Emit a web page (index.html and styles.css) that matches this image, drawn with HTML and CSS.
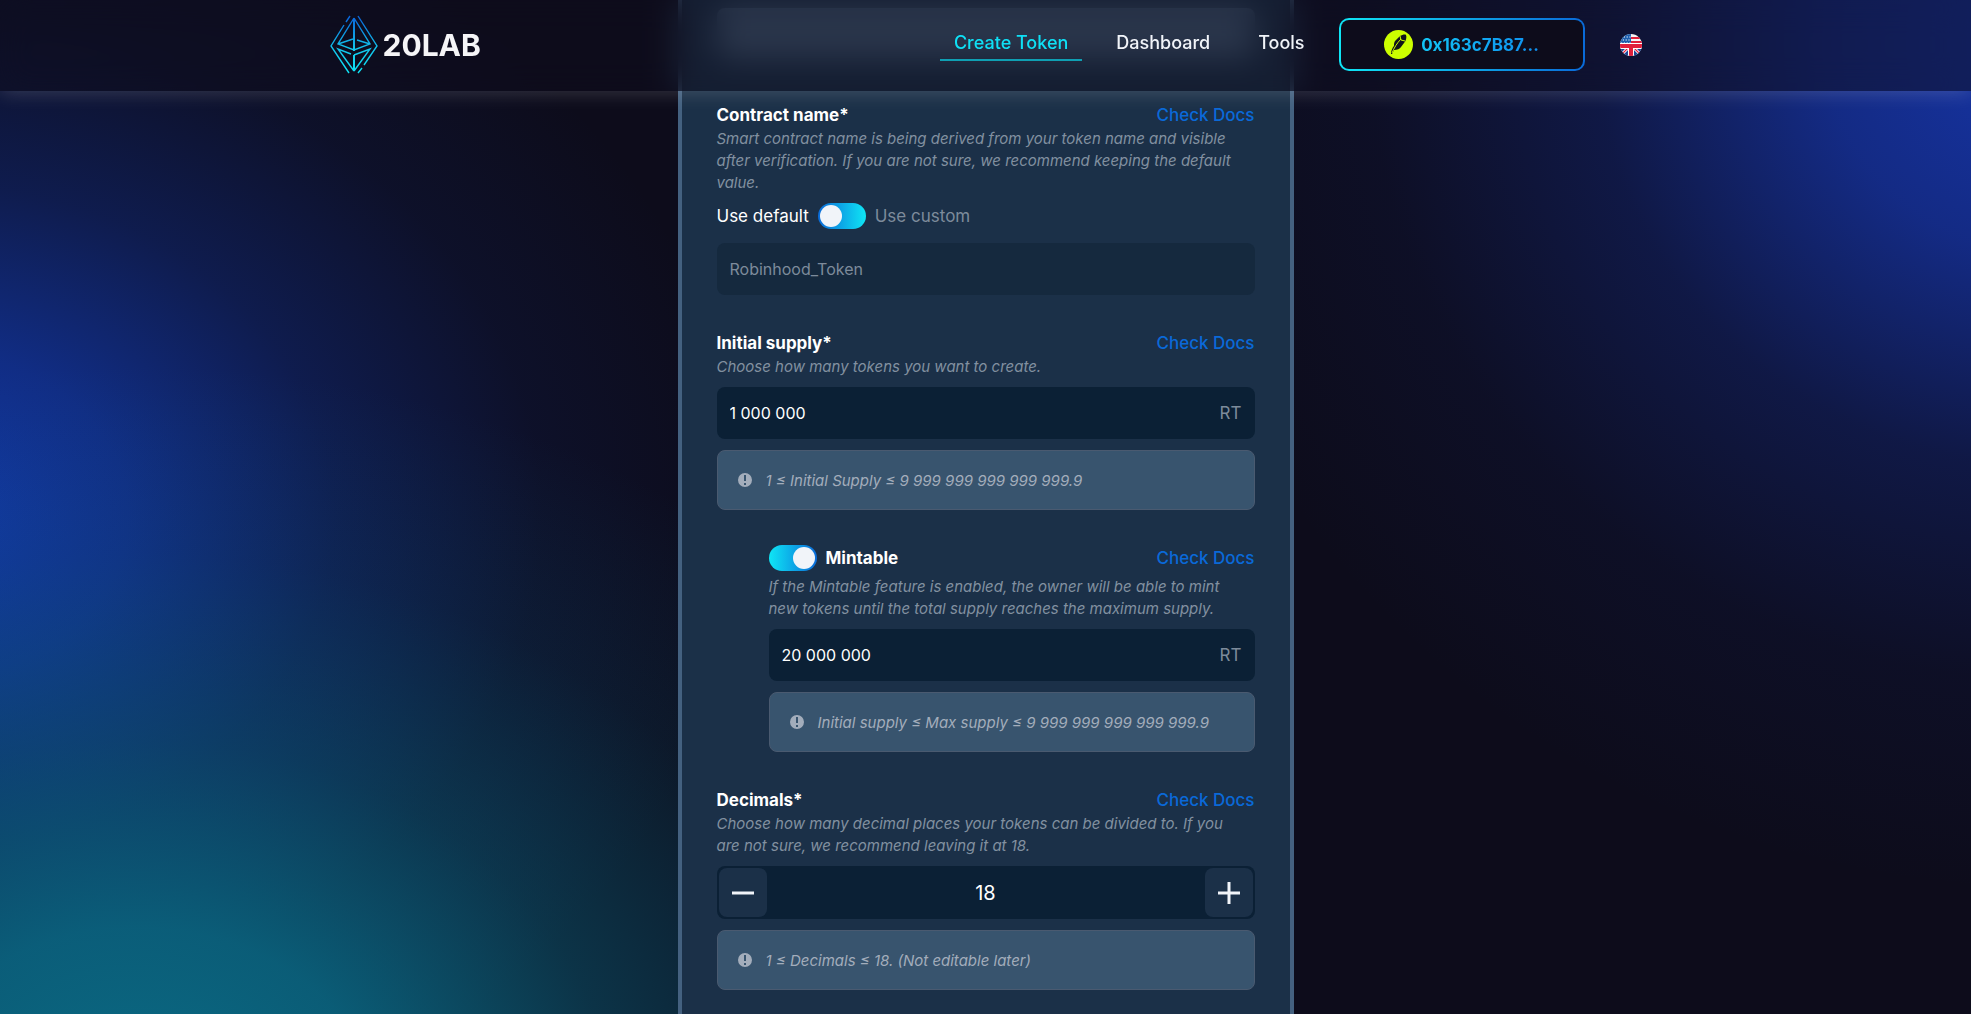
FILE: index.html
```
<!DOCTYPE html>
<html lang="en">

<head>
  <meta charset="UTF-8" />
  <meta name="viewport" content="width=device-width, initial-scale=1.0" />
  <title>20LAB - Create Token</title>
  <link rel="stylesheet" href="styles.css">
</head>

<body>
  <header class="header">
    <div class="header-inner">
      <a class="logo" href="#">
        <svg class="logo-mark" viewBox="0 0 48 60" width="48" height="60" fill="none" stroke="url(#logoGrad)" stroke-width="1.4">
          <defs>
            <linearGradient id="logoGrad" gradientUnits="userSpaceOnUse" x1="0" y1="0" x2="0" y2="60">
              <stop offset="0" stop-color="#0a5fd8" />
              <stop offset=".55" stop-color="#12c4ec" />
              <stop offset="1" stop-color="#0fe6f5" />
            </linearGradient>
          </defs>
          <path d="M20 1l-4 6M14 10L1 31l18 27" />
          <path d="M28 1l19 30-13 19M32 53l-4 5" />
          <path d="M24 3v33M24 40v16" stroke-width="2" />
          <path d="M24 3L8 29l16 6 16-6L24 3M8 29l15-5M40 29l-13-4" />
          <path d="M24 56L8 34l13 5M24 56l16-22-16 6" />
        </svg>
        <span class="logo-text">20LAB</span>
      </a>
      <nav class="nav">
        <a class="nav-link active" href="#">Create Token</a>
        <a class="nav-link" href="#">Dashboard</a>
        <a class="nav-link" href="#">Tools</a>
      </nav>
      <button class="wallet" type="button">
        <svg viewBox="0 0 29 29" width="29" height="29">
          <circle cx="14.500" cy="14.500" r="14.500" fill="#ccff00" />
          <path d="M7 24c0-4 2-7 3-8 0-3 0-4 2-6l4-4c2-1 5-2 6-1 1 2 0 6-2 8l-3 4c-1 2-4 3-7 3l-2 4z" fill="#10131a" />
          <path d="M8 23c2-5 5-10 9-14M16 6l1 4 4 1" fill="none" stroke="#ccff00" />
        </svg>
        <span class="wallet-text">0x163c7B87...</span>
      </button>
      <button class="lang" type="button" aria-label="Language">
        <svg viewBox="0 0 22 22" width="22" height="22">
          <clipPath id="flagClip"><circle cx="11" cy="11" r="11" /></clipPath>
          <g clip-path="url(#flagClip)">
            <path fill="#f4f4f4" d="M0 0h22v22H0z" />
            <path stroke="#e0203c" stroke-width="2" d="M11 4h11M11 8h11" />
            <path fill="#1d5fae" d="M0 0h11v11H0z" />
            <path stroke="#fff" stroke-width="1.200" stroke-dasharray="1.200 1.600" d="M1 3h10M0 6h10M1 9h10" />
            <path fill="#1c4796" d="M0 14h22v8H0z" />
            <path stroke="#fff" stroke-width="3" d="M9 13L0 22M13 13l9 9" />
            <path stroke="#e0203c" stroke-width="1.200" d="M9 13L0 22M13 13l9 9" />
            <path stroke="#fff" stroke-width="6" d="M11 11v11M0 12h22" />
            <path stroke="#e0203c" stroke-width="4" d="M11 10v12M0 12h22" />
          </g>
        </svg>
      </button>
    </div>
  </header>

  <main class="card">
    <div class="card-top"></div>

    <section class="field">
      <div class="field-head">
        <label class="title" for="contract">Contract name*</label>
        <a class="docs" href="#">Check Docs</a>
      </div>
      <p class="desc">Smart contract name is being derived from your token name and visible after verification. If you are not sure, we recommend keeping the default value.</p>
      <label class="choice">
        <span>Use default</span>
        <input class="switch" type="checkbox">
        <span class="muted">Use custom</span>
      </label>
      <input class="box disabled" id="contract" type="text" value="Robinhood_Token" disabled>
    </section>

    <section class="field">
      <div class="field-head">
        <label class="title" for="supply">Initial supply*</label>
        <a class="docs" href="#">Check Docs</a>
      </div>
      <p class="desc">Choose how many tokens you want to create.</p>
      <div class="box">
        <input class="amount" id="supply" type="text" value="1 000 000">
        <span class="unit">RT</span>
      </div>
      <div class="info">
        <svg class="info-icon" viewBox="0 0 16 16" width="16" height="16"><circle cx="8" cy="8" r="8" /><path d="M8 3v6M8 11v2" /></svg>
        <span>1 ≤ Initial Supply ≤ 9 999 999 999 999 999.9</span>
      </div>
    </section>

    <section class="field nested">
      <div class="field-head">
        <label class="title with-switch"><input class="switch" type="checkbox" checked> Mintable</label>
        <a class="docs" href="#">Check Docs</a>
      </div>
      <p class="desc">If the Mintable feature is enabled, the owner will be able to mint new tokens until the total supply reaches the maximum supply.</p>
      <div class="box">
        <input class="amount" type="text" aria-label="Max supply" value="20 000 000">
        <span class="unit">RT</span>
      </div>
      <div class="info">
        <svg class="info-icon" viewBox="0 0 16 16" width="16" height="16"><circle cx="8" cy="8" r="8" /><path d="M8 3v6M8 11v2" /></svg>
        <span>Initial supply ≤ Max supply ≤ 9 999 999 999 999 999.9</span>
      </div>
    </section>

    <section class="field">
      <div class="field-head">
        <label class="title" for="decimals">Decimals*</label>
        <a class="docs" href="#">Check Docs</a>
      </div>
      <p class="desc">Choose how many decimal places your tokens can be divided to. If you are not sure, we recommend leaving it at 18.</p>
      <div class="stepper">
        <button class="step" type="button" aria-label="Decrease"><svg viewBox="0 0 22 22" width="22" height="22"><path d="M0 11h22" /></svg></button>
        <input class="step-value" id="decimals" type="text" value="18">
        <button class="step" type="button" aria-label="Increase"><svg viewBox="0 0 22 22" width="22" height="22"><path d="M0 11h22M11 0v22" /></svg></button>
      </div>
      <div class="info">
        <svg class="info-icon" viewBox="0 0 16 16" width="16" height="16"><circle cx="8" cy="8" r="8" /><path d="M8 3v6M8 11v2" /></svg>
        <span>1 ≤ Decimals ≤ 18. (Not editable later)</span>
      </div>
    </section>
  </main>
</body>

</html>
```
FILE: styles.css
```
* {
  box-sizing: border-box;
}

body {
  margin: 0;
  min-height: 100vh;
  font-family: Inter, "Liberation Sans", sans-serif;
  font-size: 16px;
  color: #fff;
  background-color: #0d0c1b;
  background-image:
    radial-gradient(ellipse 48% 74% at 7% 110%, #0a6c86 0%, rgba(10, 106, 133, .85) 25%, rgba(10, 106, 133, .42) 50%, rgba(10, 106, 133, .13) 75%, rgba(10, 106, 133, 0) 100%),
    radial-gradient(ellipse 42% 66% at -4% 51%, #1238a8 0%, rgba(18, 56, 168, .75) 25%, rgba(18, 56, 168, .36) 50%, rgba(18, 56, 168, .1) 75%, rgba(18, 56, 168, 0) 100%),
    radial-gradient(ellipse 46% 84% at 104% 4%, #1635a8 0%, rgba(22, 53, 168, .75) 25%, rgba(22, 53, 168, .3) 50%, rgba(22, 53, 168, .08) 75%, rgba(22, 53, 168, 0) 100%);
  background-attachment: fixed;
}

a {
  text-decoration: none;
}

input,
button {
  font: inherit;
  color: inherit;
}

.header {
  position: fixed;
  top: 0;
  left: 0;
  right: 0;
  z-index: 2;
  height: 91px;
  background: rgba(13, 12, 27, .5);
  backdrop-filter: blur(16px);
  box-shadow: 0 0 20px rgba(255, 255, 255, .2);
}

.header-inner {
  display: flex;
  align-items: center;
  max-width: 1312px;
  height: 89px;
  margin: 0 auto;
}

.logo {
  display: flex;
  align-items: center;
  gap: 5px;
  margin-right: auto;
  color: #f5f5f7;
}

.logo-text {
  font-size: 30px;
  font-weight: 700;
}

.nav {
  display: flex;
  gap: 20px;
  margin-right: 20px;
  padding-bottom: 4px;
}

.nav-link {
  padding: 4px 14px 2px;
  border-bottom: 2px solid transparent;
  font-size: 18px;
  font-weight: 500;
  line-height: 28px;
  color: #f1f4f9;
}

.nav-link.active {
  color: #0fe0f5;
  border-color: #0f9fb3;
}

.wallet {
  display: flex;
  align-items: center;
  justify-content: center;
  gap: 8px;
  width: 246px;
  height: 53px;
  border: 2px solid transparent;
  border-radius: 10px;
  background:
    linear-gradient(#0d0c1b, #0d0c1b) padding-box,
    linear-gradient(90deg, #0fe6f5, #0a6ad8) border-box;
}

.wallet-text {
  font-size: 17px;
  font-weight: 700;
  background: linear-gradient(90deg, #12c4f5, #0f8ff0);
  background-clip: text;
  color: transparent;
}

.lang {
  display: flex;
  margin-left: 35px;
  padding: 0;
  border: 0;
  background: none;
}

.card {
  width: 616px;
  max-width: 100%;
  margin: 0 auto;
  padding: 8px 35px 0;
  border: solid #446180;
  border-width: 0 4px;
  background: #1b3048;
}

/* panel scrolled under the header */
.card-top {
  height: 50px;
  margin-bottom: 44px;
  border-radius: 8px;
  background: #48617c;
}

.field {
  padding-bottom: 35px;
}

.field:last-child {
  padding-bottom: 24px;
}

.nested {
  padding-left: 52px;
}

.field-head {
  display: flex;
  align-items: center;
  justify-content: space-between;
  min-height: 26px;
}

.nested .field-head {
  margin-bottom: 5px;
}

.title,
.docs {
  font-size: 17px;
  line-height: 26px;
}

.title {
  font-weight: 700;
}

.with-switch {
  display: flex;
  align-items: center;
  gap: 9px;
}

.docs {
  font-weight: 500;
  color: #0a69d8;
}

.desc {
  margin: 0 0 9px;
  padding-right: 10px;
  font-size: 15px;
  font-style: italic;
  line-height: 22px;
  color: #8290a0;
}

.choice {
  display: flex;
  align-items: center;
  gap: 9px;
  margin-bottom: 14px;
  font-size: 17px;
  line-height: 26px;
}

.muted {
  color: #7d8b9b;
}

.switch {
  appearance: none;
  display: flex;
  width: 48px;
  height: 26px;
  margin: 0;
  padding: 2px;
  border-radius: 13px;
  background: linear-gradient(90deg, #0a6ad8, #0fe6f5);
}

.switch::before {
  content: "";
  width: 22px;
  height: 22px;
  border-radius: 50%;
  background: #f1f4f9;
}

.switch:checked {
  justify-content: flex-end;
  background: linear-gradient(90deg, #0fe6f5, #0a6ad8);
}

.box {
  display: flex;
  align-items: center;
  width: 100%;
  height: 52px;
  padding: 0 13px;
  border: 0;
  border-radius: 8px;
  background: #0b2035;
}

.disabled {
  background: #15293e;
  color: #7d8b9b;
}

.amount {
  flex: 1;
  min-width: 0;
  padding: 0;
  border: 0;
  background: none;
}

.unit {
  font-size: 17px;
  color: #7d8b9b;
}

.info {
  display: flex;
  align-items: center;
  gap: 13px;
  height: 60px;
  margin-top: 11px;
  padding: 0 19px;
  border: 1px solid #4a5a70;
  border-radius: 8px;
  background: #38546e;
  font-size: 15px;
  font-style: italic;
  color: #a3adbb;
}

.info-icon {
  fill: #a3adbb;
  stroke: #38546e;
  stroke-width: 2;
}

.stepper {
  display: flex;
  height: 53px;
  padding: 2px;
  border-radius: 8px;
  background: #0b2035;
}

.step {
  display: flex;
  align-items: center;
  justify-content: center;
  width: 48px;
  padding: 0;
  border: 0;
  border-radius: 8px;
  background: #1b3048;
}

.step svg {
  stroke: #f1f4f9;
  stroke-width: 3;
}

.step-value {
  flex: 1;
  min-width: 0;
  padding: 0;
  border: 0;
  background: none;
  font-size: 20px;
  text-align: center;
}
```
